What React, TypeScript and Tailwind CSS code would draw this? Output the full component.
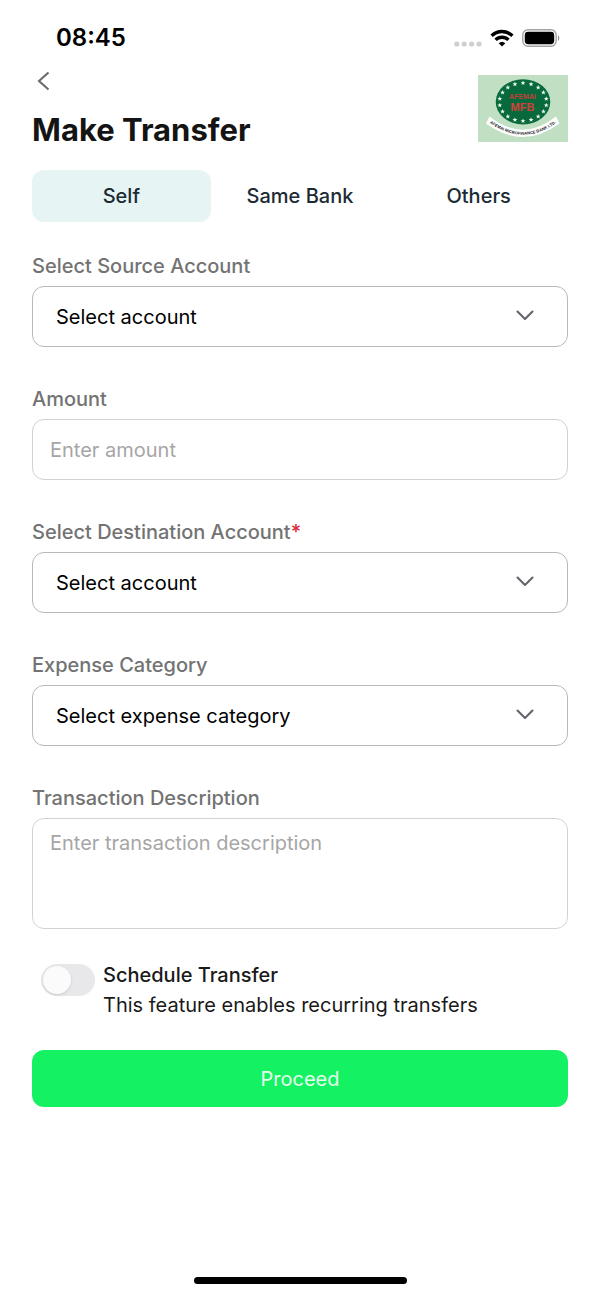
import { useState } from "react";
import type { ReactNode } from "react";

const controlClass =
  "w-full appearance-none rounded-xl border bg-white text-xl text-black outline-none";

function StatusBar() {
  return (
    <div className="flex h-16 items-center justify-between pl-14 pr-10 pb-0 pt-3">
      <span className="text-2xl font-semibold text-black">08:45</span>
      <div className="flex items-center gap-2">
        <svg width="28" height="6" viewBox="0 0 28 6" fill="#cfcfcf" className="mt-3" aria-hidden="true">
          <circle cx="2.8" cy="3" r="2.6" />
          <circle cx="10.2" cy="3" r="2.6" />
          <circle cx="17.6" cy="3" r="2.6" />
          <circle cx="25" cy="3" r="2.6" />
        </svg>
        <svg width="24" height="18" viewBox="0 0 24 18" fill="none" stroke="#000" strokeWidth="3.4" aria-hidden="true">
          <path d="M1.6 6.8a14.8 14.8 0 0 1 20.8 0" />
          <path d="M5.6 10.9a9.1 9.1 0 0 1 12.8 0" />
          <path d="M12 17.6l-3.3-3.4a4.8 4.8 0 0 1 6.6 0z" fill="#000" stroke="none" />
        </svg>
        <svg width="38" height="18" viewBox="0 0 38 18" aria-hidden="true">
          <rect x="0.8" y="0.8" width="33.4" height="16.4" rx="5.2" fill="#fff" stroke="#a3a3a3" strokeWidth="1.4" />
          <rect x="2.8" y="2.8" width="29.4" height="12.4" rx="3.4" fill="#000" />
          <path d="M36 6.2c1.7.6 1.7 5 0 5.6z" fill="#8f8f8f" />
        </svg>
      </div>
    </div>
  );
}

const starPoints = "0,-2.5 0.65,-0.8 2.4,-0.75 1,0.3 1.5,2 0,1 -1.5,2 -1,0.3 -2.4,-0.75 -0.65,-0.8";
const stars = Array.from({ length: 18 }, (_, i) => {
  const angle = (i * Math.PI * 2) / 18 - Math.PI / 2;
  return { x: 45 + Math.cos(angle) * 23.6, y: 27 + Math.sin(angle) * 19 };
});

function BankLogo() {
  return (
    <svg
      width="90"
      height="67"
      viewBox="0 0 90 67"
      role="img"
      aria-label="Afemai Microfinance Bank Ltd."
      className="font-['Liberation_Sans',sans-serif] font-bold"
    >
      <rect width="90" height="67" fill="#c1e0c3" />
      <path d="M8 48.5 L11.5 41.5 Q45 68 78 41.5 L81.5 48.5 Q45 75.5 8 48.5z" fill="#fff" />
      <ellipse cx="45" cy="26.8" rx="27.3" ry="22.6" fill="#08693c" />
      {stars.map((s, i) => (
        <polygon key={i} points={starPoints} fill="#f2fff5" transform={`translate(${s.x} ${s.y})`} />
      ))}
      <text x="44.5" y="24" textAnchor="middle" fontSize="7" fill="#c0403a">
        AFEMAI
      </text>
      <text x="44.5" y="35.5" textAnchor="middle" fontSize="11" fill="#d5403a">
        MFB
      </text>
      <path id="ribbon" d="M6 43.5 Q45 76 84 43.5" fill="none" />
      <text fontSize="4.1" fill="#222">
        <textPath href="#ribbon" startOffset="50%" textAnchor="middle">
          AFEMAI MICROFINANCE BANK LTD.
        </textPath>
      </text>
    </svg>
  );
}

function Field({ id, label, required, children }: { id: string; label: string; required?: boolean; children: ReactNode }) {
  return (
    <div className="flex flex-col gap-2">
      <label htmlFor={id} className="text-xl leading-6 font-medium text-[#737373]">
        {label}
        {required && <span className="text-[#d92d3a]">*</span>}
      </label>
      {children}
    </div>
  );
}

function SelectBox({ id, placeholder }: { id: string; placeholder: string }) {
  return (
    <div className="grid items-center">
      <select id={id} className={`${controlClass} col-start-1 row-start-1 h-[61px] border-[#b8b8b8] pl-[23px] pr-16`}>
        <option>{placeholder}</option>
      </select>
      <svg
        width="18"
        height="11"
        viewBox="0 0 18 11"
        fill="none"
        stroke="#62656b"
        strokeWidth="2.1"
        strokeLinecap="round"
        strokeLinejoin="round"
        className="pointer-events-none col-start-1 row-start-1 mr-[34px] mb-0.5 justify-self-end"
        aria-hidden="true"
      >
        <path d="M1.5 1.5 9 9l7.5-7.5" />
      </svg>
    </div>
  );
}

const tabs = ["Self", "Same Bank", "Others"];

export default function App() {
  const [active, setActive] = useState("Self");

  return (
    <div className="flex min-h-screen flex-col bg-white font-['Inter',sans-serif]">
      <StatusBar />
      <main className="flex flex-col px-8">
        <header className="flex items-start justify-between pt-[11px]">
          <div className="flex flex-col items-start gap-5">
            <button type="button" aria-label="Back" className="flex h-3 w-6 items-center pl-1">
              <svg width="14" height="20" viewBox="0 0 14 20" fill="none" stroke="#6b6b6b" strokeWidth="2.1" aria-hidden="true">
                <path d="M12.5 1.5 3 10l9.5 8.5" />
              </svg>
            </button>
            <h1 className="text-[31px] leading-[46px] font-bold text-[#141414]">Make Transfer</h1>
          </div>
          <BankLogo />
        </header>

        <div role="tablist" className="mt-[17px] grid grid-cols-3">
          {tabs.map((tab) => (
            <button
              key={tab}
              type="button"
              role="tab"
              aria-selected={active === tab}
              onClick={() => setActive(tab)}
              className={`h-[52px] rounded-xl text-xl font-medium text-[#1b2b33] ${active === tab ? "bg-[#e6f5f4]" : ""}`}
            >
              {tab}
            </button>
          ))}
        </div>

        <form className="mt-8 flex flex-col" onSubmit={(e) => e.preventDefault()}>
          <div className="flex flex-col gap-10">
            <Field id="source" label="Select Source Account">
              <SelectBox id="source" placeholder="Select account" />
            </Field>
            <Field id="amount" label="Amount">
              <input
                id="amount"
                type="text"
                inputMode="decimal"
                placeholder="Enter amount"
                className={`${controlClass} h-[61px] border-[#d2d2d2] px-[17px] placeholder:text-[#a6a6a6]`}
              />
            </Field>
            <Field id="destination" label="Select Destination Account" required>
              <SelectBox id="destination" placeholder="Select account" />
            </Field>
            <Field id="category" label="Expense Category">
              <SelectBox id="category" placeholder="Select expense category" />
            </Field>
            <Field id="description" label="Transaction Description">
              <textarea
                id="description"
                placeholder="Enter transaction description"
                className={`${controlClass} h-[111px] resize-none border-[#d2d2d2] px-[17px] py-2.5 placeholder:text-[#a6a6a6]`}
              />
            </Field>
          </div>

          <div className="mt-[31px] flex items-start gap-2 pl-[9px]">
            <input
              id="schedule"
              type="checkbox"
              role="switch"
              aria-describedby="schedule-hint"
              className="mt-1 h-8 w-[54px] shrink-0 appearance-none rounded-full bg-[#e8e8ea] p-0.5 before:block before:size-7 before:rounded-full before:bg-[#fbfbfb] before:shadow checked:bg-[#14f163] checked:before:ml-[22px]"
            />
            <div className="flex flex-col text-xl leading-[30px] text-[#1a1a1a]">
              <label htmlFor="schedule" className="font-medium">
                Schedule Transfer
              </label>
              <p id="schedule-hint">This feature enables recurring transfers</p>
            </div>
          </div>

          <button type="submit" className="mt-[30px] h-[57px] rounded-xl bg-[#14f163] text-xl text-[#e6ffee]">
            Proceed
          </button>
        </form>
      </main>
      <div className="mx-auto mt-auto mb-4 h-[7px] w-[213px] rounded-full bg-black" />
    </div>
  );
}
